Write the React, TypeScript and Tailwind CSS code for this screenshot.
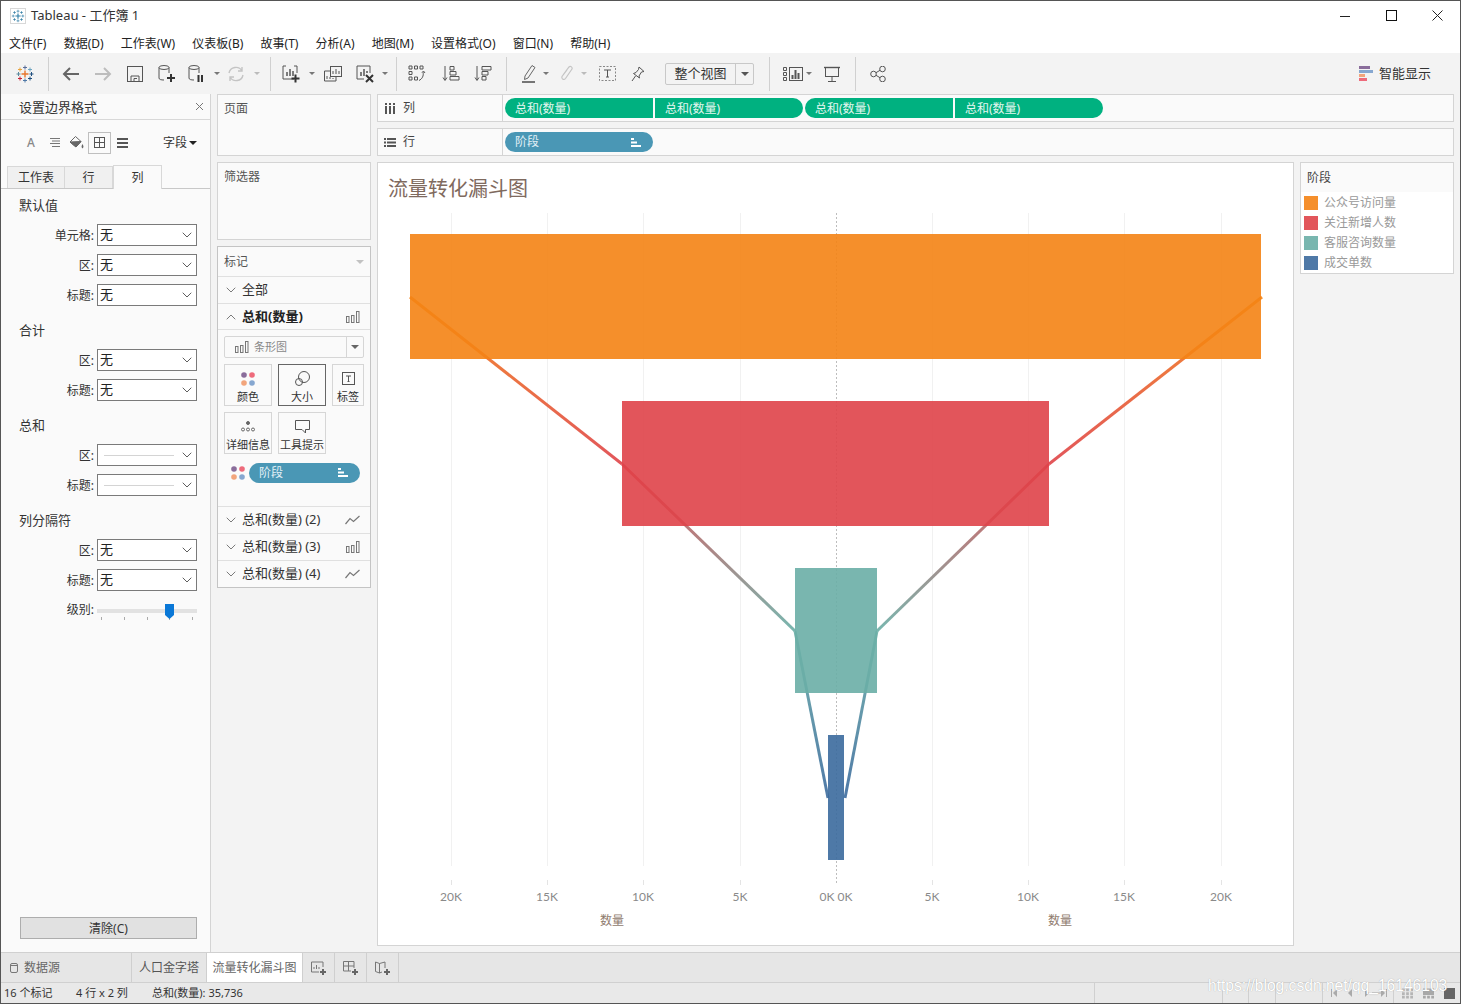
import { ChevronDown, ChevronUp } from 'lucide-react';

const MENUS = ['文件(F)', '数据(D)', '工作表(W)', '仪表板(B)', '故事(T)', '分析(A)', '地图(M)', '设置格式(O)', '窗口(N)', '帮助(H)'];

const AXIS_TICKS = [
    { x: 451, label: '20K' },
    { x: 547, label: '15K' },
    { x: 643, label: '10K' },
    { x: 740, label: '5K' },
    { x: 932, label: '5K' },
    { x: 1028, label: '10K' },
    { x: 1124, label: '15K' },
    { x: 1221, label: '20K' },
];

// fills are a bit darker than the visible colour since the bars are see-through
const BARS = [
    { x: 410, y: 234, w: 851, fill: '#f48314' },
    { x: 622, y: 401, w: 427, fill: '#df4349' },
    { x: 795, y: 568, w: 82, fill: '#6aaea6' },
    { x: 828, y: 735, w: 16, fill: '#3b6a9d' },
];

const LEGEND = [
    { label: '公众号访问量', color: 'bg-[#f58f2c]' },
    { label: '关注新增人数', color: 'bg-[#e2565b]' },
    { label: '客服咨询数量', color: 'bg-[#79b6af]' },
    { label: '成交单数', color: 'bg-[#4f79a7]' },
];

const Ico = ({ children, w = 20, h = 20 }: { children: React.ReactNode; w?: number; h?: number }) => (
    <svg width={w} height={h} viewBox={`0 0 ${w} ${h}`} fill="none" stroke="#555" strokeWidth="1">
        {children}
    </svg>
);

const Caret = ({ color = 'border-t-[#777]' }: { color?: string }) => (
    <span className={`w-0 h-0 border-x-[3px] border-x-transparent border-t-[3px] ${color}`} />
);

// small cross used by both tableau logos
const Cross = ({ x, y, r, c, sw = 1 }: { x: number; y: number; r: number; c: string; sw?: number }) => (
    <path d={`M${x - r} ${y}H${x + r}M${x} ${y - r}V${y + r}`} stroke={c} strokeWidth={sw} />
);

const TableauLogo = () => (
    <svg width="18" height="18" viewBox="0 0 18 18" fill="none">
        <Cross x={9} y={9} r={3.5} c="#e8762d" sw={1.4} />
        <Cross x={9} y={2.5} r={2} c="#5b6f9a" />
        <Cross x={9} y={15.5} r={2} c="#4e79a7" />
        <Cross x={2.5} y={9} r={2} c="#59879b" />
        <Cross x={15.5} y={9} r={2} c="#1f4f7f" />
        <Cross x={4} y={4.5} r={2} c="#e8a33d" />
        <Cross x={14} y={4.5} r={2} c="#6ea5c1" />
        <Cross x={4} y={13.5} r={2} c="#c72035" />
        <Cross x={14} y={13.5} r={2} c="#1f4f7f" />
    </svg>
);

const TitleLogo = () => (
    <svg width="16" height="16" viewBox="0 0 16 16" fill="none" className="border border-[#d8d8d8]">
        <Cross x={8} y={8} r={3} c="#2f7fa8" sw={1.3} />
        <Cross x={8} y={2.5} r={1.6} c="#5a97b8" />
        <Cross x={8} y={13.5} r={1.6} c="#5a97b8" />
        <Cross x={2.5} y={8} r={1.6} c="#5a97b8" />
        <Cross x={13.5} y={8} r={1.6} c="#5a97b8" />
        <Cross x={4} y={4} r={1.4} c="#3b84a8" />
        <Cross x={12} y={4} r={1.4} c="#3b84a8" />
        <Cross x={4} y={12} r={1.4} c="#3b84a8" />
        <Cross x={12} y={12} r={1.4} c="#3b84a8" />
    </svg>
);

const Plus = ({ x, y }: { x: number; y: number }) => (
    <path d={`M${x - 4} ${y}H${x + 4}M${x} ${y - 4}V${y + 4}`} stroke="#333" strokeWidth="2" />
);

const Divider = ({ ml }: { ml: string }) => <span className={`w-px h-[34px] bg-[#d0d0d0] ${ml}`} />;

const BarsIcon = () => (
    <svg width="14" height="12" viewBox="0 0 14 12" fill="none" stroke="#777" strokeWidth="1">
        <rect x="0.5" y="5.5" width="2.5" height="6" />
        <rect x="5.5" y="4.5" width="2.5" height="7" />
        <rect x="10.5" y="0.5" width="2.5" height="11" />
    </svg>
);

const LineIcon = () => (
    <svg width="15" height="10" viewBox="0 0 15 10" fill="none" stroke="#777" strokeWidth="1.2">
        <path d="M0.5 9L5 3.5L8.5 6.5L14.5 1" />
    </svg>
);

const SortLines = () => (
    <svg width="10" height="9" viewBox="0 0 10 9" fill="#fff">
        <rect x="0" y="0" width="3" height="2" />
        <rect x="0" y="3.5" width="6" height="2" />
        <rect x="0" y="7" width="10" height="2" />
    </svg>
);

const Dots = ({ size = 14 }: { size?: number }) => (
    <svg width={size} height={size} viewBox="0 0 14 14">
        <circle cx="3" cy="3" r="2.8" fill="#8a6d9b" />
        <circle cx="11" cy="3" r="2.8" fill="#ee6b7b" />
        <circle cx="3" cy="11" r="2.8" fill="#f2a57c" />
        <circle cx="11" cy="11" r="2.8" fill="#86a7d0" />
    </svg>
);

const Pill = ({ left }: { left: boolean }) => (
    <div className={`w-[148px] h-5 bg-[#00b180] flex items-center pl-[10px] pt-px text-xs text-[#e4f7f0] ${left ? 'rounded-l-[10px]' : 'rounded-r-[10px]'}`}>
        总和(数量)
    </div>
);

const FormatSelect = ({ label, line }: { label: string; line?: boolean }) => (
    <div className="flex items-center justify-end h-[22px] text-xs text-[#333]">
        <span className="mr-[3px] pt-px">{label}:</span>
        <div className="w-[100px] h-[22px] border border-[#7a7a7a] bg-white flex items-center pl-[2px] pr-px">
            {line ? <span className="ml-[4px] w-[70px] h-px bg-[#d4d4d4]" /> : <span className="text-[13px] text-[#222]">无</span>}
            <ChevronDown className="ml-auto" size={16} strokeWidth={1.3} color="#444" />
        </div>
    </div>
);

const FormatSection = ({ title, children }: { title: string; children: React.ReactNode }) => (
    <section className="flex flex-col">
        <div className="pl-[18px] h-[18px] mb-[10px] leading-[18px] text-[13px] text-[#333]">{title}</div>
        <div className="flex flex-col gap-2 pr-[13px]">{children}</div>
    </section>
);

const MarkRow = ({ label, icon }: { label: string; icon: React.ReactNode }) => (
    <div className="h-[27px] border-t border-[#e0e0e0] flex items-center pl-[5px] pr-[10px] text-[13px] text-[#333]">
        <ChevronDown size={16} strokeWidth={1.3} color="#666" />
        <span className="ml-[3px]">{label}</span>
        <span className="ml-auto">{icon}</span>
    </div>
);

const MarkBtn = ({ w, label, active, children }: { w: string; label: string; active?: boolean; children: React.ReactNode }) => (
    <div className={`${w} h-[42px] border ${active ? 'border-[#666]' : 'border-[#d6d6d6]'} flex flex-col items-center text-[11px] leading-[14px] text-[#333]`}>
        <div className="h-[25px] flex items-center justify-center pt-[3px]">{children}</div>
        <span>{label}</span>
    </div>
);

const TabIcon = ({ children }: { children: React.ReactNode }) => (
    <div className="w-[32px] h-full border-r border-[#cfcfcf] flex items-center justify-center">{children}</div>
);

const Toolbar = () => (
    <div className="h-[41px] bg-[#f3f3f3] flex items-center shrink-0">
        <div className="w-[47px] flex justify-center"><TableauLogo /></div>
        <Divider ml="" />
        <div className="ml-[6px] w-[32px] flex justify-center">
            <svg width="18" height="16" viewBox="0 0 18 16" fill="none" stroke="#666" strokeWidth="2"><path d="M17 8H2M8 2L2 8L8 14" /></svg>
        </div>
        <div className="w-[32px] flex justify-center">
            <svg width="18" height="16" viewBox="0 0 18 16" fill="none" stroke="#bdbdbd" strokeWidth="2"><path d="M1 8H16M10 2L16 8L10 14" /></svg>
        </div>
        <div className="w-[32px] flex justify-center">
            <Ico w={16} h={16}><rect x="0.5" y="0.5" width="15" height="15" /><path d="M4 15V10H12V15M7 15V12.5H10" /></Ico>
        </div>
        <div className="w-[31px] flex justify-center">
            <Ico w={18} h={18}><ellipse cx="6" cy="2.5" rx="5" ry="2" /><path d="M1 2.5V13C1 14.5 3 15 6 15M11 2.5V8" /><Plus x={13} y={13} /></Ico>
        </div>
        <div className="w-[30px] flex justify-center">
            <Ico w={18} h={18}><ellipse cx="6" cy="2.5" rx="5" ry="2" /><path d="M1 2.5V13C1 14.5 3 15 6 15M11 2.5V8" /><path d="M10.5 10V17M14 10V17" stroke="#333" strokeWidth="2" /></Ico>
        </div>
        <div className="w-[10px] flex justify-center"><Caret /></div>
        <div className="w-[28px] flex justify-center">
            <svg width="18" height="18" viewBox="0 0 18 18" fill="none" stroke="#c4c4c4" strokeWidth="1.4"><path d="M2 8A7 7 0 0 1 15 6M16 10A7 7 0 0 1 3 12M15 2V6H11M3 16V12H7" /></svg>
        </div>
        <div className="ml-[2px] w-[10px] flex justify-center"><Caret color="border-t-[#bbb]" /></div>
        <Divider ml="ml-[8px]" />
        <div className="ml-[4px] w-[32px] flex justify-center">
            <Ico w={18} h={18}><path d="M4 1H1V14H12M12 1H15V8" /><path d="M5 11V7M8 11V4M11 11V6" strokeWidth="1.5" /><Plus x={13.5} y={13.5} /></Ico>
        </div>
        <div className="w-[10px] flex justify-center"><Caret /></div>
        <div className="w-[32px] flex justify-center">
            <Ico w={18} h={16}><rect x="6.5" y="0.5" width="11" height="10" fill="#f3f3f3" /><path d="M9 8V5M12 8V3M15 8V5" /><path d="M6 5H0.5V15H12V11" /><path d="M3 13V10M6 13V11M9 13V12" /></Ico>
        </div>
        <div className="w-[31px] flex justify-center">
            <Ico w={18} h={18}><path d="M12 1H1V14H8M12 1H14V8" /><path d="M5 11V7M8 11V4M11 8V6" strokeWidth="1.5" /><path d="M10 10L17 17M17 10L10 17" stroke="#333" strokeWidth="2" /></Ico>
        </div>
        <div className="w-[10px] flex justify-center"><Caret /></div>
        <Divider ml="ml-[6px]" />
        <div className="ml-[4px] w-[32px] flex justify-center">
            <Ico w={18} h={18}><path d="M1 1H4V4H1ZM6.5 1H9.5V4H6.5ZM12 1H15V4H12ZM1 6.5H4V9.5H1ZM1 12H4V15H1ZM6.5 12H9.5V15H6.5Z" /><path d="M15 7C16 11 14 14 11 15.5M14 7.5L15.5 6L17 8" /></Ico>
        </div>
        <div className="ml-[2px] w-[32px] flex justify-center">
            <Ico w={18} h={17}><path d="M3 1V15M1 12.5L3 15.5L5 12.5" /><path d="M8 1.5H12V5H8ZM8 6.5H14V10H8ZM8 11.5H17V15H8Z" /></Ico>
        </div>
        <div className="w-[32px] flex justify-center">
            <Ico w={18} h={17}><path d="M3 1V15M1 12.5L3 15.5L5 12.5" /><path d="M8 1.5H17V5H8ZM8 6.5H14V10H8ZM8 11.5H12V15H8Z" /></Ico>
        </div>
        <Divider ml="ml-[7px]" />
        <div className="ml-[10px] w-[24px] flex justify-center">
            <svg width="14" height="19" viewBox="0 0 14 19" fill="none" stroke="#666" strokeWidth="1"><path d="M3 12L10 1.5L13 3.5L6 14L2.5 15.5Z" /><path d="M0 18H13" strokeWidth="1.6" stroke="#555" /></svg>
        </div>
        <div className="w-[10px] flex justify-center"><Caret /></div>
        <div className="ml-[4px] w-[24px] flex justify-center">
            <svg width="14" height="17" viewBox="0 0 14 17" fill="none" stroke="#c4c4c4" strokeWidth="1.2"><path d="M3 10L9 2C10.5 0.5 13 2.5 12 4L5.5 13.5C4 15.5 1 14 2 11.5L7 5" /></svg>
        </div>
        <div className="w-[10px] flex justify-center"><Caret color="border-t-[#bbb]" /></div>
        <div className="ml-[6px] w-[24px] flex justify-center">
            <svg width="17" height="15" viewBox="0 0 17 15" fill="none" stroke="#888" strokeWidth="1"><rect x="0.5" y="0.5" width="16" height="14" strokeDasharray="2 1.5" /><path d="M5 4H12M8.5 4V11M7 11H10" stroke="#555" /></svg>
        </div>
        <div className="ml-px w-[36px] flex justify-center">
            <svg width="14" height="16" viewBox="0 0 14 16" fill="none" stroke="#555" strokeWidth="1"><path d="M8 1L13 5.5L10.5 6L8 10L8.5 12L2.5 7.5L5 6.5L7.5 3.5ZM4.5 10L1 15" /></svg>
        </div>
        <div className="ml-[9px] w-[89px] h-[22px] border border-[#c8c8c8] rounded-[2px] flex items-center text-[13px] text-[#333]">
            <span className="w-[69px] text-center">整个视图</span>
            <span className="w-[18px] h-full border-l border-[#c8c8c8] flex items-center justify-center">
                <span className="w-0 h-0 border-x-[4px] border-x-transparent border-t-[4px] border-t-[#555]" />
            </span>
        </div>
        <Divider ml="ml-[15px]" />
        <div className="ml-[12px] w-[21px] flex justify-center">
            <Ico w={20} h={14}><path d="M0.5 0.5H3.5V3.5H0.5ZM0.5 5.5H3.5V8.5H0.5ZM0.5 10.5H3.5V13.5H0.5Z" /><rect x="6.5" y="0.5" width="13" height="13" /><path d="M9.5 12V8M12.5 12V3M15.5 12V6" strokeWidth="2" /></Ico>
        </div>
        <div className="ml-[1px] w-[10px] flex justify-center"><Caret /></div>
        <div className="ml-[2px] w-[32px] flex justify-center">
            <Ico w={16} h={16}><path d="M0 1.5H16" strokeWidth="1.4" /><rect x="1.5" y="1.5" width="13" height="9" /><path d="M8 10.5V15M4 15.5H12" /></Ico>
        </div>
        <Divider ml="ml-[7px]" />
        <div className="ml-[6px] w-[32px] flex justify-center">
            <Ico w={16} h={16}><circle cx="3.5" cy="8" r="2.8" /><circle cx="12.5" cy="3" r="2.8" /><circle cx="12.5" cy="13" r="2.8" /><path d="M6 6.7L10 4.3M6 9.3L10 11.7" /></Ico>
        </div>
        <div className="ml-auto mr-[29px] flex items-center gap-[6px] text-[13px] text-[#333]">
            <span className="flex flex-col gap-px">
                <span className="w-[11px] h-[3px] bg-[#8a6d9b]" />
                <span className="w-[14px] h-[3px] bg-[#86a7d0]" />
                <span className="w-[6px] h-[3px] bg-[#f2a57c]" />
                <span className="w-[8px] h-[3px] bg-[#ee6b7b]" />
            </span>
            智能显示
        </div>
    </div>
);

const FormatPanel = () => (
    <aside className="w-[210px] shrink-0 bg-[#fafafa] border-r border-[#d4d4d4] flex flex-col">
        <div className="h-[26px] border-b border-[#d8d8d8] flex items-center pl-[18px] pr-[6px] pt-[2px] text-[13px] text-[#333]">
            设置边界格式
            <svg className="ml-auto mb-[3px]" width="9" height="9" viewBox="0 0 9 9" stroke="#777" strokeWidth="1"><path d="M1 1L8 8M8 1L1 8" /></svg>
        </div>
        <div className="h-[45px] flex items-center pl-[26px] pr-[13px]">
            <span className="w-[17px] text-xs font-medium text-[#888]">A</span>
            <span className="w-[20px] flex justify-center">
                <Ico w={11} h={9}><path d="M1 .5H11M3 3H11M1 5.5H11M3 8.5H11" stroke="#777" /></Ico>
            </span>
            <span className="w-[24px] flex justify-center">
                <svg width="15" height="13" viewBox="0 0 15 13" fill="none" stroke="#666"><path d="M6.5 0.5L12 5.5L7 11L1 6Z" /><path d="M1 6L12 5.5L7 11Z" fill="#666" /><path d="M13.5 8C14.5 10 15 11 13.5 12.5C12 11 12.5 10 13.5 8Z" fill="#666" stroke="none" /></svg>
            </span>
            <span className="w-[23px] h-[22px] border border-[#bfbfbf] flex items-center justify-center">
                <Ico w={11} h={11}><rect x="0.5" y="0.5" width="10" height="10" /><path d="M5.5 0V11M0 5.5H11" /></Ico>
            </span>
            <span className="ml-[6px] flex flex-col gap-[2px]">
                <span className="w-[11px] h-[2px] bg-[#555]" />
                <span className="w-[11px] h-[2px] bg-[#555]" />
                <span className="w-[11px] h-[2px] bg-[#555]" />
            </span>
            <span className="ml-auto flex items-center gap-[2px] text-xs text-[#333]">
                字段
                <span className="w-0 h-0 border-x-[4px] border-x-transparent border-t-[4px] border-t-[#222]" />
            </span>
        </div>
        <div className="h-[24px] border-b border-[#c8c8c8] flex items-end pl-[6px] text-xs text-[#333]">
            <div className="w-[58px] h-[22px] bg-[#f0f0f0] border border-b-0 border-[#d8d8d8] flex items-center justify-center pt-px">工作表</div>
            <div className="w-[48px] h-[22px] bg-[#f0f0f0] border-t border-r border-[#d8d8d8] flex items-center justify-center pt-px">行</div>
            <div className="w-[49px] h-[24px] -mb-px bg-[#fafafa] border border-b-0 border-[#d8d8d8] flex items-center justify-center">列</div>
        </div>
        <div className="pt-[7px] flex flex-col gap-[15px]">
            <FormatSection title="默认值">
                <FormatSelect label="单元格" />
                <FormatSelect label="区" />
                <FormatSelect label="标题" />
            </FormatSection>
            <FormatSection title="合计">
                <FormatSelect label="区" />
                <FormatSelect label="标题" />
            </FormatSection>
            <FormatSection title="总和">
                <FormatSelect label="区" line />
                <FormatSelect label="标题" line />
            </FormatSection>
            <FormatSection title="列分隔符">
                <FormatSelect label="区" />
                <FormatSelect label="标题" />
                <div className="mt-[2px] flex items-start justify-end text-xs text-[#333]">
                    <span className="mr-[3px] pt-[1px]">级别:</span>
                    <div className="relative w-[100px] h-[18px] pt-[8px]">
                        <div className="h-[4px] bg-[#e2e2e2]" />
                        <div className="mt-[4px] px-[4px] flex justify-between">
                            <span className="w-px h-[3px] bg-[#aaa]" />
                            <span className="w-px h-[3px] bg-[#aaa]" />
                            <span className="w-px h-[3px] bg-[#aaa]" />
                            <span className="w-px h-[3px] bg-[#aaa]" />
                            <span className="w-px h-[3px] bg-[#aaa]" />
                        </div>
                        <svg className="absolute left-[68px] top-[3px]" width="9" height="15" viewBox="0 0 9 15"><path d="M0 0H9V11L4.5 15L0 11Z" fill="#0a78d7" /></svg>
                    </div>
                </div>
            </FormatSection>
        </div>
        <div className="mt-auto mb-[13px] ml-[19px] w-[177px] h-[22px] bg-[#e1e1e1] border border-[#adadad] flex items-center justify-center pt-px text-xs text-[#333]">
            清除(C)
        </div>
    </aside>
);

const MarksCard = () => (
    <div className="h-[342px] border border-[#c4c4c4] flex flex-col bg-[#fafafa]">
        <div className="h-[29px] flex items-center pl-[6px] pr-[6px] pt-px text-xs text-[#555]">
            标记
            <span className="ml-auto w-0 h-0 border-x-[4px] border-x-transparent border-t-[4px] border-t-[#c2c2c2]" />
        </div>
        <div className="h-[27px] border-t border-[#e0e0e0] flex items-center pl-[5px] text-[13px] text-[#333]">
            <ChevronDown size={16} strokeWidth={1.3} color="#666" />
            <span className="ml-[3px]">全部</span>
        </div>
        <div className="h-[26px] border-t border-[#e0e0e0] flex items-center pl-[5px] pr-[10px] pt-px text-[13px] font-bold text-[#222]">
            <ChevronUp size={16} strokeWidth={1.3} color="#666" />
            <span className="ml-[3px]">总和(数量)</span>
            <span className="ml-auto"><BarsIcon /></span>
        </div>
        <div className="h-[178px] border-t border-[#e0e0e0] px-[6px] pt-[6px]">
            <div className="h-[22px] border border-[#d6d6d6] rounded-[2px] flex items-center pl-[10px] text-[11px] text-[#888]">
                <BarsIcon />
                <span className="ml-[5px]">条形图</span>
                <span className="ml-auto w-[17px] h-full border-l border-[#d6d6d6] flex items-center justify-center">
                    <span className="w-0 h-0 border-x-[4px] border-x-transparent border-t-[4px] border-t-[#666]" />
                </span>
            </div>
            <div className="mt-[6px] flex gap-[6px]">
                <MarkBtn w="w-[48px]" label="颜色"><Dots /></MarkBtn>
                <MarkBtn w="w-[48px]" label="大小" active>
                    <Ico w={15} h={15}><circle cx="9" cy="6" r="5.5" /><circle cx="4" cy="11" r="3.5" /></Ico>
                </MarkBtn>
                <MarkBtn w="w-[32px]" label="标签">
                    <svg width="13" height="13" viewBox="0 0 13 13" fill="none" stroke="#555"><rect x="0.5" y="0.5" width="12" height="12" /><path d="M4 4H9M6.5 4V9.5M5.5 9.5H7.5" /></svg>
                </MarkBtn>
            </div>
            <div className="mt-[6px] flex gap-[6px]">
                <MarkBtn w="w-[48px]" label="详细信息">
                    <svg width="14" height="11" viewBox="0 0 14 11" fill="none" stroke="#666"><circle cx="7" cy="2" r="1.5" fill="#666" /><circle cx="2" cy="8.5" r="1.5" /><circle cx="7" cy="8.5" r="1.5" /><circle cx="12" cy="8.5" r="1.5" /></svg>
                </MarkBtn>
                <MarkBtn w="w-[48px]" label="工具提示">
                    <Ico w={15} h={14}><path d="M0.5 0.5H14.5V9.5H10.5V13L7 9.5H0.5Z" /></Ico>
                </MarkBtn>
            </div>
            <div className="mt-[9px] flex items-center pl-[7px]">
                <Dots size={14} />
                <div className="ml-[4px] w-[111px] h-5 rounded-[10px] bg-[#4a97b5] flex items-center pl-[10px] pr-[12px] text-xs text-[#e2f0f5]">
                    阶段
                    <span className="ml-auto flex"><SortLines /></span>
                </div>
            </div>
        </div>
        <MarkRow label="总和(数量) (2)" icon={<LineIcon />} />
        <MarkRow label="总和(数量) (3)" icon={<BarsIcon />} />
        <MarkRow label="总和(数量) (4)" icon={<LineIcon />} />
    </div>
);

const FunnelChart = () => (
    <svg width="915" height="732" viewBox="378 213 915 732" className="block">
        <defs>
            <linearGradient id="l1" gradientUnits="userSpaceOnUse" x1="0" y1="297" x2="0" y2="464">
                <stop offset="0" stopColor="#f58f2c" /><stop offset="1" stopColor="#e2565b" />
            </linearGradient>
            <linearGradient id="l2" gradientUnits="userSpaceOnUse" x1="0" y1="464" x2="0" y2="631">
                <stop offset="0" stopColor="#e2565b" /><stop offset="1" stopColor="#79b6af" />
            </linearGradient>
            <linearGradient id="l3" gradientUnits="userSpaceOnUse" x1="0" y1="631" x2="0" y2="798">
                <stop offset="0" stopColor="#79b6af" /><stop offset="1" stopColor="#4f79a7" />
            </linearGradient>
        </defs>
        {AXIS_TICKS.map((t) => (
            <g key={`${t.x}`}>
                <line x1={t.x + 0.5} x2={t.x + 0.5} y1="213" y2="866" stroke="#f1f1f1" />
                <line x1={t.x + 0.5} x2={t.x + 0.5} y1="880" y2="885" stroke="#e4e4e4" />
                <text x={t.x} y="901" textAnchor="middle" fontSize="12" fill="#8a8a8a" fontFamily="Lato, sans-serif">{t.label}</text>
            </g>
        ))}
        <line x1="836.5" x2="836.5" y1="213" y2="885" stroke="#bdbdbd" strokeDasharray="2 2" />
        <text x="836" y="901" textAnchor="middle" fontSize="12" fill="#8a8a8a" fontFamily="Lato, sans-serif">0K 0K</text>
        <text x="612" y="925" textAnchor="middle" fontSize="12" fill="#8f7b6e" fontFamily="'Noto Sans CJK SC', sans-serif">数量</text>
        <text x="1060" y="925" textAnchor="middle" fontSize="12" fill="#8f7b6e" fontFamily="'Noto Sans CJK SC', sans-serif">数量</text>
        <g fill="none" strokeWidth="3">
            <path d="M410 297L622 464" stroke="url(#l1)" />
            <path d="M622 464L795 631" stroke="url(#l2)" />
            <path d="M795 631L828 798" stroke="url(#l3)" />
            <path d="M1262 297L1049 464" stroke="url(#l1)" />
            <path d="M1049 464L877 631" stroke="url(#l2)" />
            <path d="M877 631L845 798" stroke="url(#l3)" />
        </g>
        {BARS.map((b) => (
            <rect key={b.x} x={b.x} y={b.y} width={b.w} height="125" fill={b.fill} fillOpacity="0.9" />
        ))}
    </svg>
);

const StatusBar = () => (
    <div className="relative h-[21px] border-t border-[#d0d0d0] bg-[#e9e9e9] flex items-center text-[11px] text-[#333] shrink-0">
        <span className="ml-[3px] w-[72px]">16 个标记</span>
        <span className="w-[76px]">4 行 x 2 列</span>
        <span>总和(数量): 35,736</span>
        <div className="ml-auto h-full flex">
            <span className="w-[128px] border-l border-[#d0d0d0]" />
            <span className="w-[26px] border-l border-[#d0d0d0]" />
            <span className="w-[27px] border-l border-[#d0d0d0]" />
            <span className="w-[47px] border-l border-[#d0d0d0]" />
            <span className="w-[71px] border-l border-[#d0d0d0] flex items-center pl-[8px]">
                <svg width="56" height="8" viewBox="0 0 56 8" fill="#aaa"><path d="M0 0H1V8H0ZM6 0V8L2 4ZM21 0V8L17 4ZM34 0V8L38 4ZM50 0V8L54 4ZM55 0H56V8H55Z" /><path d="M41 3.5H50V4.5H41Z" /></svg>
            </span>
            <span className="w-[67px] border-l border-[#d0d0d0] flex items-center justify-end gap-[10px] pr-[5px]">
                <svg width="11" height="11" viewBox="0 0 12 11" fill="#b5b5b5"><path d="M0 0H3V3H0ZM4.5 0H7.5V3H4.5ZM9 0H12V3H9ZM0 4H3V7H0ZM4.5 4H7.5V7H4.5ZM9 4H12V7H9ZM0 8H3V11H0ZM4.5 8H7.5V11H4.5ZM9 8H12V11H9Z" /></svg>
                <svg width="11" height="11" viewBox="0 0 12 11" fill="#a8a8a8"><path d="M0 0H12V7H0ZM0 8H3V11H0ZM4.5 8H7.5V11H4.5ZM9 8H12V11H9Z" /></svg>
                <span className="w-[11px] h-[11px] bg-[#666]" />
            </span>
        </div>
        {/* csdn watermark over the status bar */}
        <span className="absolute left-[1207px] -top-[9px] font-['Liberation_Sans',sans-serif] text-[15.6px] text-white [text-shadow:0_0_1px_#999]">
            https://blog.csdn.net/qq_16146103
        </span>
    </div>
);

export default function App() {
    return (
        <div className="w-[1461px] h-[1004px] overflow-hidden flex flex-col border border-[#555] bg-white font-['Noto_Sans','Noto_Sans_CJK_SC',sans-serif] text-[#333]">
            <div className="h-[29px] flex items-center pl-[9px] text-[13px] text-[#333] shrink-0">
                <TitleLogo />
                <span className="ml-[5px]">Tableau - 工作簿 1</span>
                <div className="ml-auto flex items-center">
                    <span className="w-[46px] flex justify-center">
                        <svg width="10" height="10" viewBox="0 0 10 10" stroke="#222"><path d="M0 5.5H10" /></svg>
                    </span>
                    <span className="w-[46px] flex justify-center">
                        <svg width="11" height="11" viewBox="0 0 11 11" fill="none" stroke="#111"><rect x="0.5" y="0.5" width="10" height="10" /></svg>
                    </span>
                    <span className="w-[46px] flex justify-center">
                        <svg width="11" height="11" viewBox="0 0 11 11" stroke="#222"><path d="M0.5 0.5L10.5 10.5M10.5 0.5L0.5 10.5" /></svg>
                    </span>
                </div>
            </div>
            <div className="h-[23px] flex items-center gap-[17.2px] pl-[8px] pt-[4px] text-xs text-[#222] shrink-0">
                {MENUS.map((m) => (
                    <span key={m}>{m}</span>
                ))}
            </div>
            <Toolbar />
            <div className="flex-1 min-h-0 flex bg-[#f3f3f3]">
                <FormatPanel />
                <div className="w-[154px] ml-[6px] shrink-0 flex flex-col gap-[6px]">
                    <div className="h-[62px] border border-[#d4d4d4] bg-[#fafafa] pl-[6px] pt-[6px] text-xs text-[#555]">页面</div>
                    <div className="h-[78px] border border-[#d4d4d4] bg-[#fafafa] pl-[6px] pt-[6px] text-xs text-[#555]">筛选器</div>
                    <MarksCard />
                </div>
                <div className="flex-1 min-w-0 ml-[6px] mr-[6px] flex flex-col gap-[6px]">
                    <div className="h-[28px] border border-[#d4d4d4] bg-[#fafafa] flex items-center">
                        <div className="w-[125px] h-full border-r border-[#d4d4d4] flex items-center pl-[7px] gap-[8px] text-xs text-[#444]">
                            <svg width="10" height="11" viewBox="0 0 10 11" fill="#555"><path d="M0 3H2V11H0ZM4 3H6V11H4ZM8 3H10V11H8ZM0 0H2V2H0ZM4 0H6V2H4ZM8 0H10V2H8Z" /></svg>
                            列
                        </div>
                        <div className="ml-[2px] flex gap-[2px]">
                            <Pill left />
                            <Pill left={false} />
                            <Pill left />
                            <Pill left={false} />
                        </div>
                    </div>
                    <div className="h-[28px] border border-[#d4d4d4] bg-[#fafafa] flex items-center">
                        <div className="w-[125px] h-full border-r border-[#d4d4d4] flex items-center pl-[6px] gap-[7px] text-xs text-[#444]">
                            <svg width="12" height="9" viewBox="0 0 12 9" fill="#555"><path d="M0 0H2V2H0ZM3 0H12V2H3ZM0 3.5H2V5.5H0ZM3 3.5H12V5.5H3ZM0 7H2V9H0ZM3 7H12V9H3Z" /></svg>
                            行
                        </div>
                        <div className="ml-[2px] w-[148px] h-5 rounded-[10px] bg-[#4a97b5] flex items-center pl-[10px] pr-[12px] text-xs text-[#e2f0f5]">
                            阶段
                            <span className="ml-auto flex"><SortLines /></span>
                        </div>
                    </div>
                    <div className="flex gap-[6px] items-start">
                        <div className="w-[917px] h-[784px] border border-[#d4d4d4] bg-white">
                            <div className="h-[50px] pl-[10px] pt-[11px] text-[20px] leading-[30px] text-[#7f6a5e]">流量转化漏斗图</div>
                            <FunnelChart />
                        </div>
                        <div className="w-[154px] border border-[#d4d4d4] bg-white">
                            <div className="h-[29px] bg-[#fafafa] flex items-center pl-[6px] text-xs text-[#444]">阶段</div>
                            <div className="pl-[3px] pt-px flex flex-col">
                                {LEGEND.map((l) => (
                                    <div key={l.label} className="h-5 flex items-center gap-[6px] text-xs text-[#999]">
                                        <span className={`w-[14px] h-[14px] ${l.color}`} />
                                        {l.label}
                                    </div>
                                ))}
                            </div>
                        </div>
                    </div>
                </div>
            </div>
            <div className="h-[30px] border-t border-[#d0d0d0] bg-[#e6e6e6] flex items-center text-xs text-[#666] shrink-0">
                <div className="w-[131px] h-full border-r border-[#cfcfcf] flex items-center pl-[9px] gap-[6px]">
                    <Ico w={8} h={10}><rect x="0.5" y="0.5" width="7" height="9" rx="1.5" stroke="#777" /><path d="M0.5 2.5H7.5" stroke="#777" /></Ico>
                    数据源
                </div>
                <div className="w-[74px] h-full flex items-center justify-center text-[#555]">人口金字塔</div>
                <div className="w-[97px] h-full bg-white border-x border-[#cfcfcf] flex items-center justify-center text-[#666]">流量转化漏斗图</div>
                <TabIcon>
                    <Ico w={15} h={14}><path d="M11 1H0.5V11H8M11 1H12V6" stroke="#777" /><path d="M3 8V6M5.5 8V4M8 8V6" stroke="#777" /><path d="M9 11H15M12 8V14" stroke="#666" strokeWidth="2" /></Ico>
                </TabIcon>
                <TabIcon>
                    <Ico w={15} h={14}><path d="M8 10H0.5V0.5H11V7M5.5 0.5V10M0.5 5H11" stroke="#777" /><path d="M9 11H15M12 8V14" stroke="#666" strokeWidth="2" /></Ico>
                </TabIcon>
                <TabIcon>
                    <Ico w={15} h={14}><path d="M7 11L4.5 12L0.5 10.5V1L4.5 2.5L10 1V7M4.5 2.5V12" stroke="#777" /><path d="M9 11H15M12 8V14" stroke="#666" strokeWidth="2" /></Ico>
                </TabIcon>
            </div>
            <StatusBar />
        </div>
    );
}
